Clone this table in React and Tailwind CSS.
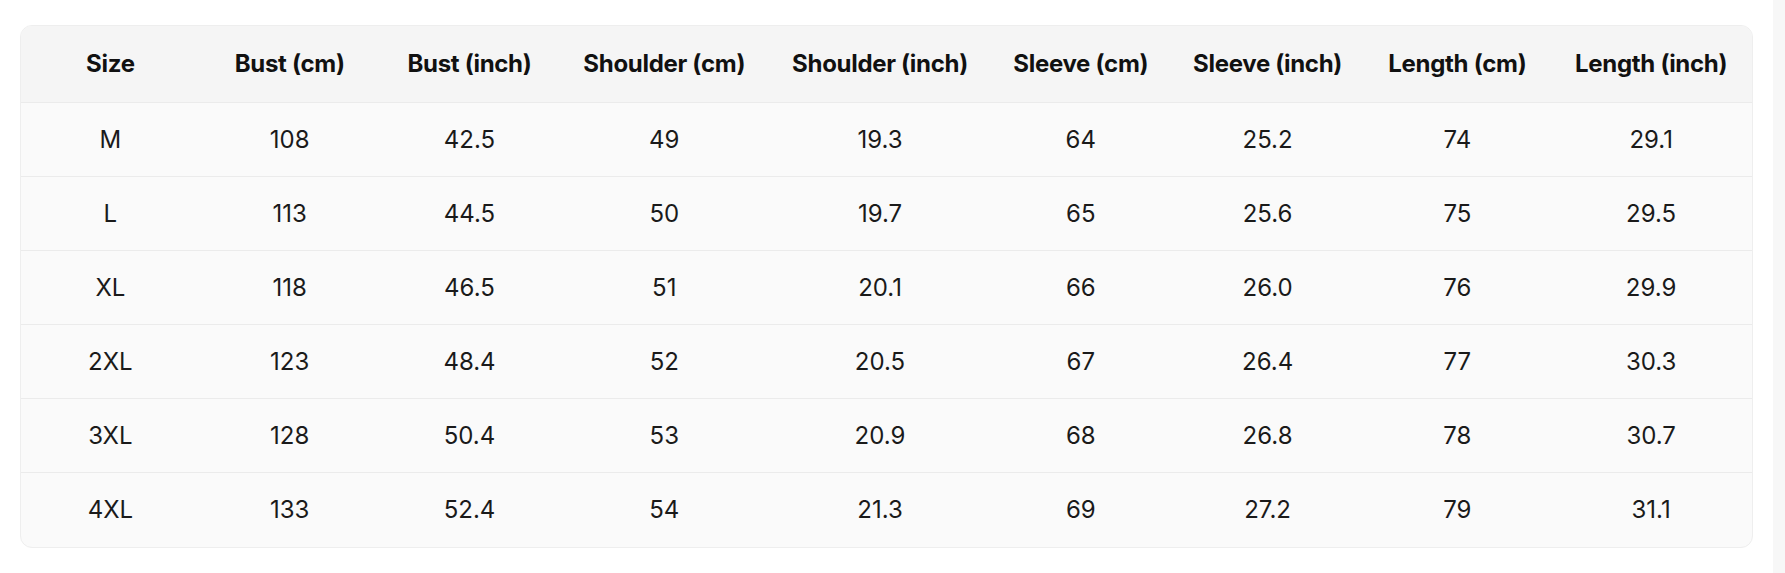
import React from 'react';

const COLUMNS = [
  { label: 'Size', w: 'w-[179px]' },
  { label: 'Bust (cm)', w: 'w-[180px]' },
  { label: 'Bust (inch)', w: 'w-[180px]' },
  { label: 'Shoulder (cm)', w: 'w-[210px]' },
  { label: 'Shoulder (inch)', w: 'w-[222px]' },
  { label: 'Sleeve (cm)', w: 'w-[180px]' },
  { label: 'Sleeve (inch)', w: 'w-[194px]' },
  { label: 'Length (cm)', w: 'w-[186px]' },
  { label: 'Length (inch)', w: 'w-[202px]' },
];

const ROWS = [
  ['M', '108', '42.5', '49', '19.3', '64', '25.2', '74', '29.1'],
  ['L', '113', '44.5', '50', '19.7', '65', '25.6', '75', '29.5'],
  ['XL', '118', '46.5', '51', '20.1', '66', '26.0', '76', '29.9'],
  ['2XL', '123', '48.4', '52', '20.5', '67', '26.4', '77', '30.3'],
  ['3XL', '128', '50.4', '53', '20.9', '68', '26.8', '78', '30.7'],
  ['4XL', '133', '52.4', '54', '21.3', '69', '27.2', '79', '31.1'],
];

const App = () => {
  return (
    <div className="w-[1785px] h-[573px] bg-white flex font-['Inter','Noto_Sans',sans-serif]">
      <div className="flex-1 pl-[20px] pt-[25px] pr-[20px]">
        {/* Size chart card */}
        <div className="w-[1733px] rounded-xl border border-[#eeeeee] overflow-hidden bg-[#fafafa]">
          <div className="flex h-[77px] bg-[#f5f5f5] border-b border-[#ebebeb]">
            {COLUMNS.map((col) => (
              <div key={col.label} className={`${col.w} flex items-center justify-center text-[24px] font-bold text-[#111111] tracking-[-0.3px]`}>
                {col.label}
              </div>
            ))}
          </div>
          {ROWS.map((row, i) => (
            <div key={row[0]} className={`flex h-[74px] ${i < ROWS.length - 1 ? 'border-b border-[#ebebeb]' : ''}`}>
              {row.map((cell, j) => (
                <div key={j} className={`${COLUMNS[j].w} flex items-center justify-center text-[24px] text-[#1a1a1a]`}>
                  {cell}
                </div>
              ))}
            </div>
          ))}
        </div>
      </div>
      {/* scrollbar track */}
      <div className="w-[12px] h-full bg-[#f7f7f7]" />
    </div>
  );
};

export default App;
